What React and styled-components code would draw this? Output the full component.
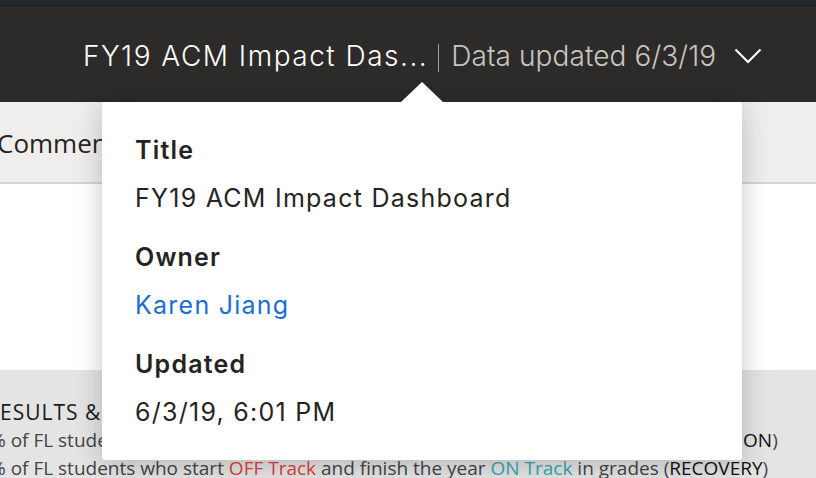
import React from "react";
import styled, { createGlobalStyle } from "styled-components";

const GlobalStyle = createGlobalStyle`
  html, body {
    margin: 0;
    padding: 0;
    background: #ffffff;
    overflow: hidden;
  }
  body {
    font-family: Inter, "Noto Sans", sans-serif;
  }
`;

const Page = styled.div`
  position: relative;
  width: 816px;
  height: 478px;
  overflow: hidden;
  display: flex;
  flex-direction: column;

  & > * {
    flex-shrink: 0;
  }
`;

const TopStrip = styled.div`
  height: 5px;
  background: #24292d;
  border-bottom: 1px solid #1a1a19;
`;

const Header = styled.header`
  height: 96px;
  background: #2d2b29;
  display: flex;
  align-items: center;
  padding-left: 83px;
  padding-top: 4px;
  box-sizing: border-box;
`;

const ReportName = styled.span`
  color: #ffffff;
  font-size: 28px;
  font-weight: 300;
  letter-spacing: 1.5px;
`;

const Divider = styled.span`
  width: 1px;
  height: 28px;
  margin: 3px 12px 0 10px;
  background: #a19f9d;
`;

const UpdatedText = styled.span`
  color: #c8c6c4;
  font-size: 28px;
  font-weight: 300;
  letter-spacing: 0.1px;
`;

const Chevron = styled.svg`
  margin-left: 18px;
  width: 28px;
  height: 16px;
`;

const Toolbar = styled.div`
  height: 82px;
  background: #efeeec;
  border-bottom: 2px solid #d6d4d1;
  display: flex;
  align-items: center;
  padding-top: 2px;
  box-sizing: border-box;
`;

const ToolbarItem = styled.span`
  margin-left: -3px;
  font-family: "Open Sans", sans-serif;
  font-size: 26px;
  color: #252423;
`;

const Canvas = styled.div`
  height: 186px;
  background: #ffffff;
`;

const Band = styled.div`
  flex: 1 1 auto;
  min-height: 0;
  overflow: hidden;
  background: #e4e4e4;
  padding-top: 28px;
  font-family: "Open Sans", sans-serif;
  font-size: 19px;
`;

const Line = styled.div`
  height: 28px;
  line-height: 28px;
  white-space: nowrap;
  margin-left: ${({ $indent }) => $indent}px;
  font-size: ${({ $strong }) => ($strong ? "21px" : "19px")};
  letter-spacing: ${({ $strong }) => ($strong ? "1px" : "0")};
  color: ${({ $strong }) => ($strong ? "#1b1b1b" : "#454545")};
`;

const Tag = styled.span`
  color: ${({ $color }) => $color};
`;

const Bold = styled.span`
  color: #111111;
`;

const Popup = styled.div`
  position: absolute;
  left: 102px;
  top: 102px;
  width: 640px;
  height: 358px;
  box-sizing: border-box;
  background: #ffffff;
  border-radius: 3px;
  box-shadow: 0 4px 28px rgba(0, 0, 0, 0.22);
  padding: 24px 33px;
  display: flex;
  flex-direction: column;
`;

const Arrow = styled.div`
  position: absolute;
  left: 299px;
  top: -20px;
  width: 0;
  height: 0;
  border-left: 21px solid transparent;
  border-right: 21px solid transparent;
  border-bottom: 20px solid #ffffff;
`;

const Field = styled.div`
  display: flex;
  flex-direction: column;
  margin-bottom: 11px;
`;

const Label = styled.div`
  font-size: 25px;
  font-weight: 600;
  letter-spacing: 1.2px;
  color: #252423;
  line-height: 48px;
`;

const Value = styled.div`
  font-size: 25px;
  letter-spacing: 1.25px;
  color: ${({ $link }) => ($link ? "#1a6fd4" : "#252423")};
  line-height: 48px;
`;

const fields = [
  { label: "Title", value: "FY19 ACM Impact Dashboard" },
  { label: "Owner", value: "Karen Jiang", link: true },
  { label: "Updated", value: "6/3/19, 6:01 PM" },
];

export default function App() {
  return (
    <Page>
      <GlobalStyle />
      <TopStrip />
      <Header>
        <ReportName>FY19 ACM Impact Das...</ReportName>
        <Divider />
        <UpdatedText>Data updated 6/3/19</UpdatedText>
        <Chevron viewBox="0 0 28 16">
          <polyline
            points="1.5,1.5 14,14 26.5,1.5"
            fill="none"
            stroke="#ffffff"
            strokeWidth="2"
          />
        </Chevron>
      </Header>
      <Toolbar>
        <ToolbarItem>Comments</ToolbarItem>
      </Toolbar>
      <Canvas />
      <Band>
        <Line $indent={-14} $strong>
          RESULTS &amp; IMPACT
        </Line>
        <Line $indent={-10}>
          % of FL students who start ON Track and remain ON Track all year in grades (
          <Bold>RETENTION</Bold>)
        </Line>
        <Line $indent={-10}>
          % of FL students who start <Tag $color="#e0403a">OFF Track</Tag> and finish
          the year <Tag $color="#35a8b5">ON Track</Tag> in grades (<Bold>RECOVERY</Bold>)
        </Line>
      </Band>
      <Popup>
        <Arrow />
        {fields.map((f) => (
          <Field key={f.label}>
            <Label>{f.label}</Label>
            <Value $link={f.link}>{f.value}</Value>
          </Field>
        ))}
      </Popup>
    </Page>
  );
}
